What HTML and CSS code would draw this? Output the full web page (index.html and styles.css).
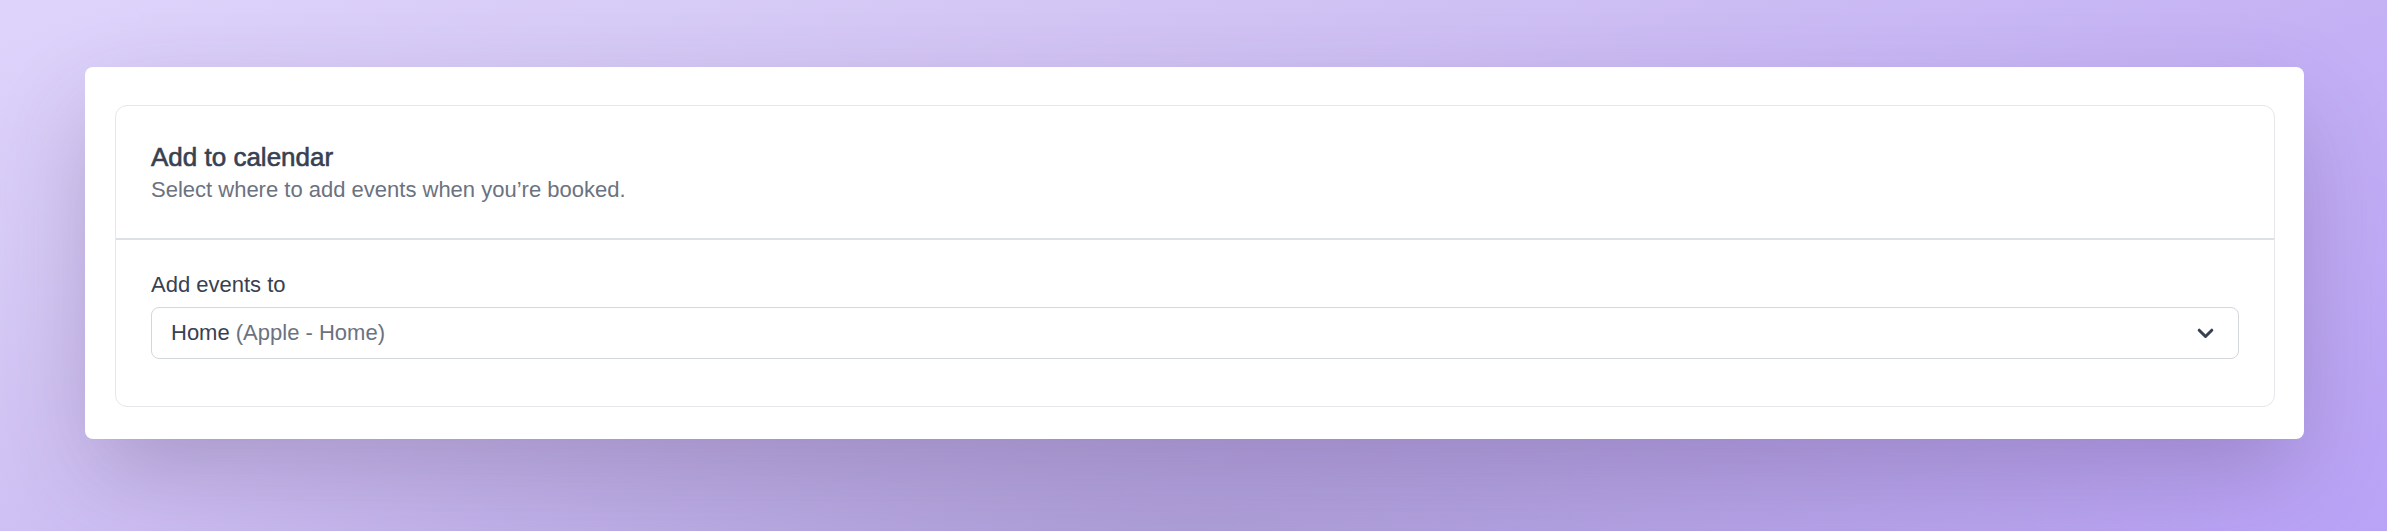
FILE: index.html
```html
<!DOCTYPE html>
<html lang="en">
<head>
<meta charset="utf-8">
<title>Add to calendar</title>
<link rel="stylesheet" href="styles.css">
</head>
<body>
  <main class="panel">
    <section class="card">
      <header class="card-header">
        <h2 class="card-title">Add to calendar</h2>
        <p class="card-subtitle">Select where to add events when you’re booked.</p>
      </header>
      <div class="card-body">
        <label class="field-label">Add events to</label>
        <div class="select">
          <span class="select-value">Home <span class="select-muted">(Apple - Home)</span></span>
          <svg class="chevron" width="17" height="11" viewBox="0 0 17 11" aria-hidden="true">
            <path d="M2.2 2.2l6.3 6.3 6.3-6.3" fill="none" stroke="#374151" stroke-width="3" stroke-linecap="round" stroke-linejoin="round"/>
          </svg>
        </div>
      </div>
    </section>
  </main>
</body>
</html>
```

FILE: styles.css
```css
* { box-sizing: border-box; }

html, body {
  margin: 0;
  width: 2387px;
  height: 531px;
  overflow: hidden;
}

body {
  font-family: "Liberation Sans", Arial, sans-serif;
  padding: 67px 83px 0 85px;
  background:
    radial-gradient(ellipse 1400px 220px at 50% 100%, rgba(150, 140, 180, 0.45), rgba(150, 140, 180, 0) 75%),
    linear-gradient(160deg, #ded4fb 0%, #d0c2f3 35%, #c3b0f5 65%, #b9a3f6 100%);
}

.panel {
  background: #ffffff;
  border-radius: 8px;
  padding: 38px 29px 32px 30px;
  box-shadow: 0 40px 90px -10px rgba(80, 60, 105, 0.32);
}

.card {
  border: 1px solid #e5e7eb;
  border-radius: 12px;
}

.card-header {
  padding: 33px 35px 33px 35px;
  border-bottom: 2px solid #dde1e6;
}

.card-title {
  margin: 0;
  font-size: 26px;
  line-height: 36px;
  font-weight: 400;
  -webkit-text-stroke: 0.6px #374151;
  color: #374151;
}

.card-subtitle {
  margin: 0;
  font-size: 22px;
  line-height: 30px;
  color: #6b7280;
}

.card-body {
  padding: 30px 35px 47px 35px;
}

.field-label {
  display: block;
  font-size: 22px;
  line-height: 30px;
  color: #374151;
  margin-bottom: 7px;
}

.select {
  display: flex;
  align-items: center;
  justify-content: space-between;
  height: 52px;
  padding: 0 24px 0 19px;
  border: 1px solid #d4d7dd;
  border-radius: 8px;
  background: #ffffff;
}

.select-value {
  font-size: 22px;
  line-height: 30px;
  color: #374151;
}

.select-muted {
  color: #6b7280;
}

.chevron {
  display: block;
  flex: none;
}
```
